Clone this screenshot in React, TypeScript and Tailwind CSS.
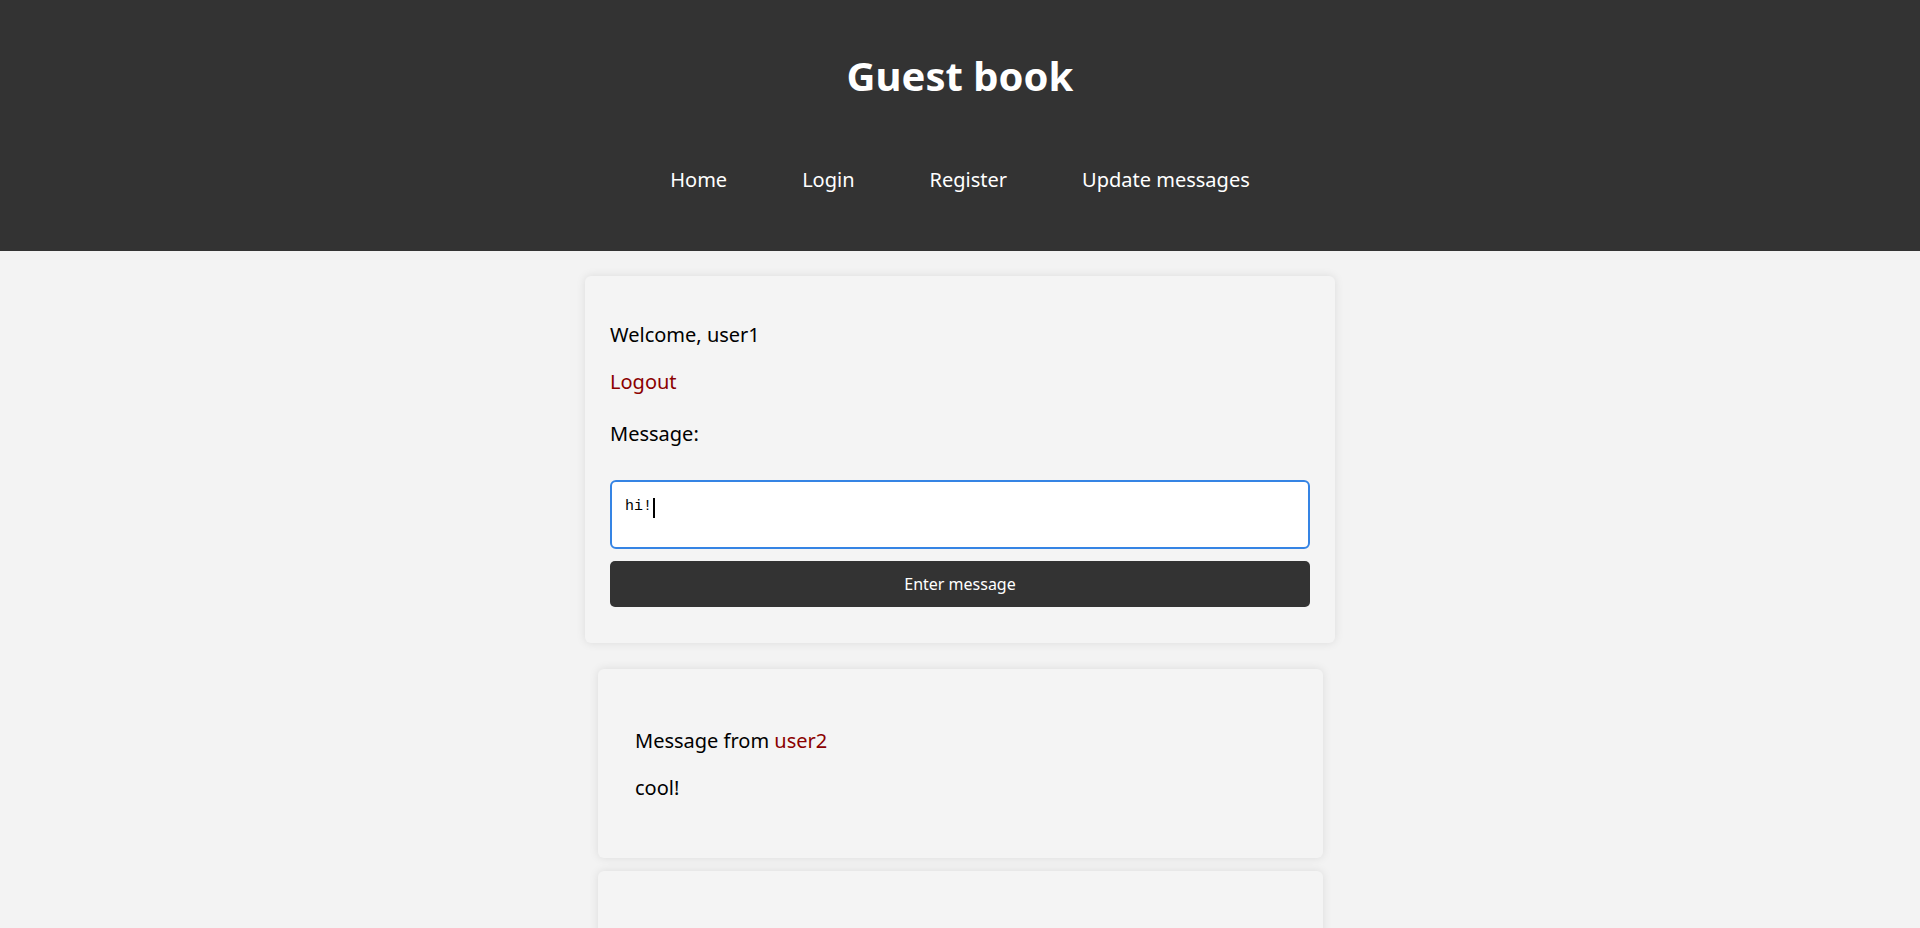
const messages = [
  { from: 'user2', text: 'cool!' },
  { from: 'user3', text: 'hello there' },
];

export default function App() {
  return (
    <div className="min-h-screen bg-[#f3f3f3] font-['Noto_Sans',sans-serif] text-[20px] text-black">
      <header className="flex h-[251px] flex-col items-center bg-[#333333] text-white">
        <h1 className="mt-[48px] text-[40px] font-bold leading-[56px]">Guest book</h1>
        <nav className="mt-[62px] flex">
          {['Home', 'Login', 'Register', 'Update messages'].map((item) => (
            <a key={item} href="#" className="px-[37.5px] leading-[27px] text-white">
              {item}
            </a>
          ))}
        </nav>
      </header>

      <main className="mx-auto flex w-[750px] flex-col pt-[25px]">
        <section className="rounded-[6px] bg-[#f4f4f4] p-[25px] pb-[36px] shadow-[0_0_10px_rgba(0,0,0,0.1)]">
          <p className="mt-[20px] leading-[27px]">Welcome, user1</p>
          <a href="#" className="mt-[20px] block leading-[27px] text-[#8b0000]">
            Logout
          </a>
          <label className="mt-[25px] block leading-[27px]">Message:</label>
          <div className="mt-[33px] flex h-[69px] items-start rounded-[6px] border-2 border-[#3584e4] bg-white px-[13px] pt-[16px] font-['Liberation_Mono',monospace] text-[15px] leading-[17px]">
            <span>hi!</span>
            <span className="ml-px h-[20px] w-[2px] bg-black" />
          </div>
          <button
            type="button"
            className="mt-[12px] h-[46px] w-full rounded-[5px] bg-[#333333] text-[16px] text-white"
          >
            Enter message
          </button>
        </section>

        <div className="mt-[26px] flex flex-col gap-[13px] px-[12.5px]">
          {messages.map((m) => (
            <article
              key={m.from}
              className="rounded-[6px] bg-[#f4f4f4] p-[37.5px] shadow-[0_0_10px_rgba(0,0,0,0.1)]"
            >
              <p className="my-[20px] leading-[27px]">
                Message from <a href="#" className="text-[#8b0000]">{m.from}</a>
              </p>
              <p className="my-[20px] leading-[27px]">{m.text}</p>
            </article>
          ))}
        </div>
      </main>
    </div>
  );
}
